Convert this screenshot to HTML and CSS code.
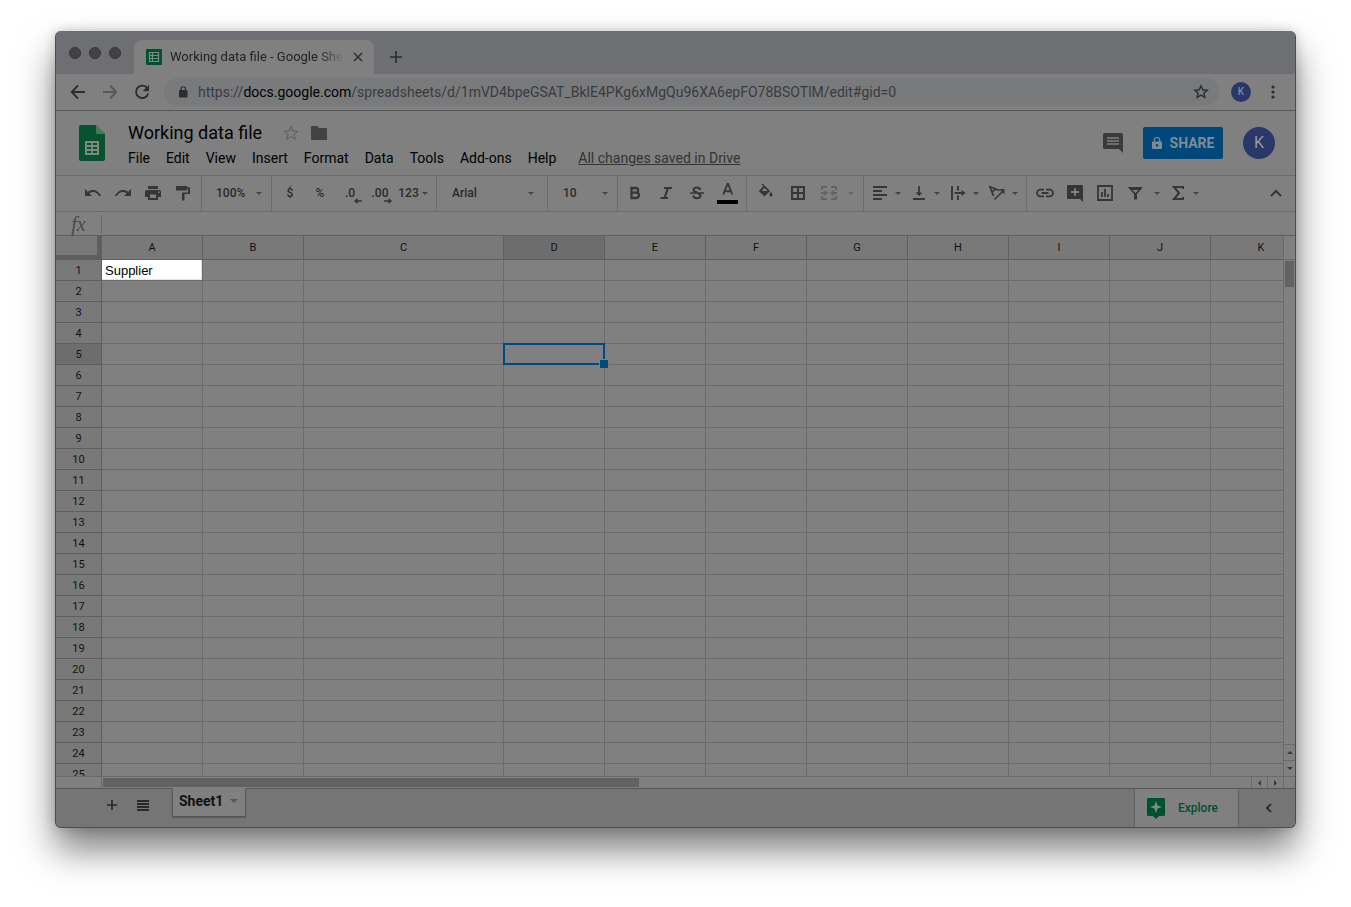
FILE: index.html
```html
<!DOCTYPE html>
<html lang="en">
<head>
<meta charset="utf-8">
<title>Working data file - Google Sheets</title>
<link rel="stylesheet" href="styles.css">
</head>
<body>
<div class="window">
  <div class="tabstrip">
    <div class="lights"><i></i><i></i><i></i></div>
    <div class="tab">
      <svg class="favicon" width="16" height="16" viewBox="0 0 16 16"><rect width="16" height="16" rx="1" fill="#00512f"/><path d="M3.5 3.5h9v9h-9zM3.5 6.5h9M3.5 9.500h9M6.500 3.500v9" fill="none" stroke="#7c8a82" stroke-width="1.200"/></svg>
      <span class="tab-title">Working data file - Google Sheets</span>
      <button class="plain" aria-label="Close tab"><svg width="10" height="10" viewBox="0 0 10 10"><path d="M1 1l8 8M9 1l-8 8" stroke="#303133" stroke-width="1.600"/></svg></button>
    </div>
    <button class="plain new-tab" aria-label="New tab"><svg width="12" height="12" viewBox="0 0 12 12"><path d="M6 0v12M0 6h12" stroke="#2b2c2e" stroke-width="1.600"/></svg></button>
  </div>

  <div class="navbar">
    <button class="plain nav" aria-label="Back"><svg width="16" height="16" viewBox="0 0 16 16"><path d="M15 8H2M8 1.500L1.700 8 8 14.500" fill="none" stroke="#2c2d2f" stroke-width="1.900"/></svg></button>
    <button class="plain nav" aria-label="Forward"><svg width="16" height="16" viewBox="0 0 16 16"><path d="M1 8h13M8 1.500L14.300 8 8 14.500" fill="none" stroke="#57585a" stroke-width="1.900"/></svg></button>
    <button class="plain nav" aria-label="Reload"><svg width="16" height="16" viewBox="0 0 16 16"><path d="M13.500 4.500A6.200 6.200 0 1 0 14.200 9.500" fill="none" stroke="#2c2d2f" stroke-width="1.900"/><path d="M15 .8v6.400H8.600z" fill="#2c2d2f"/></svg></button>
    <div class="omnibox">
      <svg width="10" height="12" viewBox="0 0 10 12"><rect x="1" y="4" width="8.500" height="7.500" rx="1" fill="#2c2d2f"/><path d="M3 5V3a2.250 2.250 0 0 1 4.500 0v2" fill="none" stroke="#2c2d2f" stroke-width="1.200"/></svg>
      <span class="url">https://<b>docs.google.com</b>/spreadsheets/d/1mVD4bpeGSAT_BklE4PKg6xMgQu96XA6epFO78BSOTlM/edit#gid=0</span>
      <svg width="16" height="16" viewBox="0 0 16 16"><path d="M8 1.800l1.800 4 4.400.400-3.300 2.900 1 4.300L8 11.100l-3.900 2.300 1-4.300L1.800 6.200l4.400-.400z" fill="none" stroke="#2c2d2f" stroke-width="1.400"/></svg>
    </div>
    <span class="avatar small">K</span>
    <button class="plain more" aria-label="More"><svg width="4" height="14" viewBox="0 0 4 14"><g fill="#2c2d2f"><circle cx="2" cy="2" r="1.600"/><circle cx="2" cy="7" r="1.600"/><circle cx="2" cy="12" r="1.600"/></g></svg></button>
  </div>

  <header class="header">
    <svg class="logo" width="26" height="36" viewBox="0 0 26 36"><path d="M2 0h15l9 9v25a2 2 0 0 1-2 2H2a2 2 0 0 1-2-2V2a2 2 0 0 1 2-2z" fill="#07532f"/><path d="M17 0l9 9h-7.500A1.500 1.500 0 0 1 17 7.500z" fill="#447a5e"/><path d="M6 16h14v14H6z" fill="#7c8a82"/><path d="M8 18h4.200v2H8zM14 18h4v2h-4zM8 22h4.200v2H8zM14 22h4v2h-4zM8 26h4.200v2H8zM14 26h4v2h-4z" fill="#07532f"/></svg>
    <div class="doc">
      <div class="title-row">
        <h1>Working data file</h1>
        <svg width="16" height="16" viewBox="0 0 16 16"><path d="M8 1l1.800 5 5.200.200-4.100 3.200 1.400 5L8 11.500l-4.300 2.900 1.400-5L1 6.200 6.200 6z" fill="none" stroke="#5c5c5c" stroke-width="1"/></svg>
        <svg width="16" height="14" viewBox="0 0 16 14"><path d="M1 0h5.500L8 2h7a1 1 0 0 1 1 1v10a1 1 0 0 1-1 1H1a1 1 0 0 1-1-1V1a1 1 0 0 1 1-1z" fill="#424242"/></svg>
      </div>
      <nav class="menus">
        <button>File</button><button>Edit</button><button>View</button><button>Insert</button><button>Format</button><button>Data</button><button>Tools</button><button>Add-ons</button><button>Help</button>
        <a href="#">All changes saved in Drive</a>
      </nav>
    </div>
    <div class="actions">
      <button class="plain" aria-label="Comments"><svg width="20" height="20" viewBox="0 0 20 20"><path d="M1.500 0h17A1.500 1.500 0 0 1 20 1.500V20l-4-4H1.500A1.500 1.500 0 0 1 0 14.500v-13A1.500 1.500 0 0 1 1.500 0z" fill="#3a3a3a"/><path d="M4 5h12M4 8h12M4 11h12" stroke="#808080" stroke-width="1.700"/></svg></button>
      <button class="share"><svg width="10" height="12" viewBox="0 0 10 12"><path d="M1 4.500h8a1 1 0 0 1 1 1V11a1 1 0 0 1-1 1H1a1 1 0 0 1-1-1V5.500a1 1 0 0 1 1-1zM5 7a1.300 1.300 0 1 0 0 2.600A1.300 1.300 0 0 0 5 7z" fill="#7f8c96" fill-rule="evenodd"/><path d="M2.300 5V3.200a2.700 2.700 0 0 1 5.400 0V5" fill="none" stroke="#7f8c96" stroke-width="1.200"/></svg>SHARE</button>
      <span class="avatar">K</span>
    </div>
  </header>

  <div class="toolbar">
    <div class="group history">
      <button aria-label="Undo"><svg width="18" height="18" viewBox="0 0 18 18"><path d="M1 5v7h7L5.400 9.400C8.500 7 12.800 8 15.300 12.300l1.700-.700C14 5.800 8 4.500 3.900 7.900z" fill="#363636"/></svg></button>
      <button aria-label="Redo"><svg width="18" height="18" viewBox="0 0 18 18"><path d="M17 5v7h-7l2.600-2.600C9.500 7 5.200 8 2.700 12.300L1 11.600C4 5.800 10 4.500 14.100 7.900z" fill="#363636"/></svg></button>
      <button aria-label="Print"><svg width="18" height="18" viewBox="0 0 18 18"><path d="M4 2h10v3H4zM3 6h12a2 2 0 0 1 2 2v5h-3v3H4v-3H1V8a2 2 0 0 1 2-2zM6 10.500V14h6v-3.500zM14 7.500V9h1.500V7.500z" fill="#363636" fill-rule="evenodd"/></svg></button>
      <button aria-label="Paint format"><svg width="18" height="18" viewBox="0 0 18 18"><path d="M2 2h11v1.200h3V10h-5.500v6.500h-2.500V8.500h6V4.700h-1V6.500H2z" fill="#363636"/></svg></button>
    </div>
    <div class="group">
      <label class="drop zoom"><select aria-label="Zoom"><option>100%</option></select></label>
    </div>
    <div class="group numbers">
      <button>$</button><button>%</button>
      <button class="dec">.0<svg width="10" height="6" viewBox="0 0 10 6"><path d="M9 3H3" stroke="#333" stroke-width="1.500"/><path d="M4.500 0v6L1 3z" fill="#333"/></svg></button>
      <button class="dec">.00<svg width="10" height="6" viewBox="0 0 10 6"><path d="M1 3h6" stroke="#333" stroke-width="1.500"/><path d="M5.500 0v6L9 3z" fill="#333"/></svg></button>
      <button class="formats caret">123</button>
    </div>
    <div class="group">
      <label class="drop font"><select aria-label="Font"><option>Arial</option></select></label>
    </div>
    <div class="group">
      <label class="drop size"><select aria-label="Font size"><option>10</option></select></label>
    </div>
    <div class="group style">
      <button aria-label="Bold"><svg width="18" height="18" viewBox="0 0 18 18"><path d="M5.500 4h4.300a2.300 2.300 0 0 1 0 4.700H5.500zM5.500 8.700h4.800a2.600 2.600 0 0 1 0 5.300H5.500z" fill="none" stroke="#363636" stroke-width="2.300"/></svg></button>
      <button aria-label="Italic"><svg width="18" height="18" viewBox="0 0 18 18"><path d="M7 4h8M3.500 14H11M11 4L7.500 14" fill="none" stroke="#363636" stroke-width="2.200"/></svg></button>
      <button aria-label="Strikethrough"><svg width="18" height="18" viewBox="0 0 18 18"><path d="M12.200 6C12 2.800 5.600 2.800 5.600 5.800 5.600 8 8 8.200 9 8.500M10 9.500c1.500.500 2.400 1.200 2.400 2.500 0 3-6.800 3-7-.500" fill="none" stroke="#363636" stroke-width="2.100"/><path d="M2 9h14" stroke="#363636" stroke-width="1.700"/></svg></button>
      <button aria-label="Text color"><svg width="22" height="22" viewBox="0 0 22 22"><path d="M6.300 12.500L10.500 2h.6l4.200 10.500M7.800 9.300h6" fill="none" stroke="#363636" stroke-width="1.900"/><path d="M0 18h21v4H0z" fill="#000"/></svg></button>
    </div>
    <div class="group cells">
      <button aria-label="Fill color"><svg width="18" height="18" viewBox="0 0 18 18"><path d="M5.500-.5l7.600 7.500-5.600 5.600L1.700 7l4.600-4.700L4.500.5zM7.500 3.800L4.500 7h6z" fill="#363636" fill-rule="evenodd"/><path d="M14 8c1 1.200 1.600 2.200 1.600 2.900a1.600 1.600 0 0 1-3.200 0c0-.700.600-1.700 1.600-2.900z" fill="#363636"/></svg></button>
      <button aria-label="Borders"><svg width="18" height="18" viewBox="0 0 18 18"><path d="M3 3h12v12H3zM9 3v12M3 9h12" fill="none" stroke="#363636" stroke-width="2"/></svg></button>
      <button class="caret faint" aria-label="Merge cells"><svg width="18" height="18" viewBox="0 0 18 18"><path d="M2 6V3h5M11 3h5v3M2 12v3h5M11 15h5v-3M1 9h4M13 9h4" fill="none" stroke="#636363" stroke-width="1.800"/><path d="M4.500 6L8 9l-3.500 3zM13.500 6L10 9l3.500 3z" fill="#636363"/></svg></button>
    </div>
    <div class="group align">
      <button class="caret" aria-label="Horizontal align"><svg width="18" height="18" viewBox="0 0 18 18"><path d="M2 3h14M2 7h9M2 11h14M2 15h9" stroke="#363636" stroke-width="1.800"/></svg></button>
      <button class="caret" aria-label="Vertical align"><svg width="18" height="18" viewBox="0 0 18 18"><path d="M3 15h12M9 2v8" stroke="#363636" stroke-width="1.800"/><path d="M5.500 8.500h7L9 12z" fill="#363636"/></svg></button>
      <button class="caret" aria-label="Text wrapping"><svg width="18" height="18" viewBox="0 0 18 18"><path d="M3 2v14M9 2v4.500M9 11.500V16M5.500 9H14" stroke="#363636" stroke-width="1.900"/><path d="M12.500 5.800L16.500 9l-4 3.200z" fill="#363636"/></svg></button>
      <button class="caret" aria-label="Text rotation"><svg width="18" height="18" viewBox="0 0 18 18"><path d="M5.500 12L2 2.800l9.500 3.700M4 8.200L7.800 4.800M6.500 15.500l8-8" fill="none" stroke="#363636" stroke-width="1.700"/><path d="M11 5h5.500v5.500z" fill="#363636"/></svg></button>
    </div>
    <div class="group insert">
      <button aria-label="Insert link"><svg width="18" height="18" viewBox="0 0 18 18"><path d="M8 5.700H4.300a3.300 3.300 0 0 0 0 6.600H8M10 5.700h3.700a3.300 3.300 0 0 1 0 6.600H10M5.500 9h7" fill="none" stroke="#363636" stroke-width="1.800"/></svg></button>
      <button aria-label="Insert comment"><svg width="18" height="18" viewBox="0 0 18 18"><path d="M2 1h14a1 1 0 0 1 1 1v16l-3-3H2a1 1 0 0 1-1-1V2a1 1 0 0 1 1-1z" fill="#363636"/><path d="M9 4v8M5 8h8" stroke="#808080" stroke-width="1.800"/></svg></button>
      <button aria-label="Insert chart"><svg width="18" height="18" viewBox="0 0 18 18"><path d="M2 2h14v14H2zM6 8v5M9 5v8M12 10v3" fill="none" stroke="#363636" stroke-width="1.800"/></svg></button>
      <button class="caret filter" aria-label="Filter"><svg width="18" height="18" viewBox="0 0 18 18"><path d="M2 3h14v1.500L11 10v5.500H8V10L3 4.500zM6.500 6L9.500 9l3-3z" fill="#363636" fill-rule="evenodd"/></svg></button>
      <button class="caret" aria-label="Functions"><svg width="18" height="18" viewBox="0 0 18 18"><path d="M14 5V3H5l5 6-5 6h9v-2" fill="none" stroke="#363636" stroke-width="2.100"/></svg></button>
    </div>
    <button class="plain collapse" aria-label="Hide menus"><svg width="12" height="8" viewBox="0 0 12 8"><path d="M1 7l5-5 5 5" fill="none" stroke="#363636" stroke-width="2"/></svg></button>
  </div>

  <div class="formula"><span class="fx">fx</span><input aria-label="Formula"></div>

  <main class="sheet">
    <div class="viewport">
      <table>
        <colgroup><col class="c-head"><col class="c"><col class="c"><col class="c-wide"><col class="c" span="8"></colgroup>
        <thead><tr><th class="corner"></th><th>A</th><th>B</th><th>C</th><th class="on">D</th><th>E</th><th>F</th><th>G</th><th>H</th><th>I</th><th>J</th><th>K</th></tr></thead>
        <tbody>
        <tr><th>1</th><td class="lit">Supplier</td><td><td><td><td><td><td><td><td><td><td></tr>
        <tr><th>2</th><td><td><td><td><td><td><td><td><td><td><td></tr>
        <tr><th>3</th><td><td><td><td><td><td><td><td><td><td><td></tr>
        <tr><th>4</th><td><td><td><td><td><td><td><td><td><td><td></tr>
        <tr><th class="on">5</th><td><td><td><td class="selected"><td><td><td><td><td><td><td></tr>
        <tr><th>6</th><td><td><td><td><td><td><td><td><td><td><td></tr>
        <tr><th>7</th><td><td><td><td><td><td><td><td><td><td><td></tr>
        <tr><th>8</th><td><td><td><td><td><td><td><td><td><td><td></tr>
        <tr><th>9</th><td><td><td><td><td><td><td><td><td><td><td></tr>
        <tr><th>10</th><td><td><td><td><td><td><td><td><td><td><td></tr>
        <tr><th>11</th><td><td><td><td><td><td><td><td><td><td><td></tr>
        <tr><th>12</th><td><td><td><td><td><td><td><td><td><td><td></tr>
        <tr><th>13</th><td><td><td><td><td><td><td><td><td><td><td></tr>
        <tr><th>14</th><td><td><td><td><td><td><td><td><td><td><td></tr>
        <tr><th>15</th><td><td><td><td><td><td><td><td><td><td><td></tr>
        <tr><th>16</th><td><td><td><td><td><td><td><td><td><td><td></tr>
        <tr><th>17</th><td><td><td><td><td><td><td><td><td><td><td></tr>
        <tr><th>18</th><td><td><td><td><td><td><td><td><td><td><td></tr>
        <tr><th>19</th><td><td><td><td><td><td><td><td><td><td><td></tr>
        <tr><th>20</th><td><td><td><td><td><td><td><td><td><td><td></tr>
        <tr><th>21</th><td><td><td><td><td><td><td><td><td><td><td></tr>
        <tr><th>22</th><td><td><td><td><td><td><td><td><td><td><td></tr>
        <tr><th>23</th><td><td><td><td><td><td><td><td><td><td><td></tr>
        <tr><th>24</th><td><td><td><td><td><td><td><td><td><td><td></tr>
        <tr><th>25</th><td><td><td><td><td><td><td><td><td><td><td></tr>
        </tbody>
      </table>
    </div>
    <div class="vscroll">
      <div class="vtop"></div>
      <div class="vthumb"></div>
      <button class="step up" aria-label="Scroll up"></button>
      <button class="step down" aria-label="Scroll down"></button>
    </div>
    <div class="hscroll">
      <div class="htrack"><div class="hthumb"></div></div>
      <button class="step prev" aria-label="Scroll left"></button>
      <button class="step next" aria-label="Scroll right"></button>
    </div>
    <div class="scroll-corner"></div>
  </main>

  <footer class="bottom">
    <button class="plain add" aria-label="Add sheet"><svg width="10" height="10" viewBox="0 0 10 10"><path d="M5 0v10M0 5h10" stroke="#2a2a2a" stroke-width="1.700"/></svg></button>
    <button class="plain list" aria-label="All sheets"><svg width="12" height="11" viewBox="0 0 12 11"><path d="M0 1h12M0 4h12M0 7h12M0 10h12" stroke="#2a2a2a" stroke-width="1.900"/></svg></button>
    <button class="sheet-tab">Sheet1</button>
    <button class="explore"><svg width="18" height="21" viewBox="0 0 18 21"><path d="M1.500 0h15A1.500 1.500 0 0 1 18 1.500v15a1.500 1.500 0 0 1-1.500 1.500H12l-3 3-3-3H1.500A1.500 1.500 0 0 1 0 16.500v-15A1.500 1.500 0 0 1 1.500 0z" fill="#00512f"/><path d="M9 3l1.600 4.400L15 9l-4.400 1.600L9 15l-1.600-4.400L3 9l4.400-1.600z" fill="#7c8a82"/></svg>Explore</button>
    <button class="plain side" aria-label="Show side panel"><svg width="7" height="10" viewBox="0 0 7 10"><path d="M6 1L2 5l4 4" fill="none" stroke="#222" stroke-width="1.700"/></svg></button>
  </footer>
</div>
</body>
</html>
```
FILE: styles.css
```css
* { box-sizing: border-box; }
body {
  margin: 0;
  height: 100vh;
  padding: 31px 55px 79px;
  background: #fff;
  font-family: Roboto, "Liberation Sans", sans-serif;
  color: #000;
  overflow: hidden;
}
button, select, input {
  margin: 0;
  padding: 0;
  border: 0;
  background: none;
  font: inherit;
  color: inherit;
  appearance: none;
}
svg { display: block; flex: none; overflow: visible; }
.plain { display: flex; align-items: center; justify-content: center; }

.window {
  display: flex;
  flex-direction: column;
  height: 100%;
  border: 1px solid #4c4c4c;
  border-top: 0;
  border-radius: 6px;
  background: #808080;
  overflow: hidden;
  box-shadow: 0 22px 36px rgba(0, 0, 0, .5), 0 0 12px rgba(0, 0, 0, .2);
}

/* Browser chrome */
.tabstrip {
  display: flex;
  height: 43px;
  padding-left: 13px;
  background: #6d6f73;
}
.lights { display: flex; gap: 8px; width: 65px; padding-top: 16px; }
.lights i {
  width: 12px;
  height: 12px;
  border: 1px solid #363636;
  border-radius: 50%;
  background: #434343;
}
.tab {
  display: flex;
  align-items: center;
  width: 240px;
  margin-top: 9px;
  padding: 0 11px 0 12px;
  border-radius: 8px 8px 0 0;
  background: #808080;
}
.tab-title {
  flex: 1;
  margin: 0 8px;
  overflow: hidden;
  white-space: nowrap;
  font-size: 13px;
  line-height: 18px;
  color: #1f2022;
  -webkit-mask-image: linear-gradient(90deg, #000 85%, transparent);
  mask-image: linear-gradient(90deg, #000 85%, transparent);
}
.new-tab { width: 44px; margin-top: 9px; }
.navbar {
  display: flex;
  align-items: center;
  height: 37px;
  padding: 0 12px 0 6px;
  border-bottom: 1px solid #585858;
}
.nav { width: 32px; height: 32px; }
.omnibox {
  display: flex;
  flex: 1;
  align-items: center;
  gap: 10px;
  height: 28px;
  margin-left: 6px;
  padding: 0 10px 0 14px;
  border-radius: 14px;
  background: #797a7c;
}
.url {
  flex: 1;
  overflow: hidden;
  white-space: nowrap;
  font-size: 14px;
  line-height: 20px;
  color: #3a3b3e;
}
.url b { font-weight: 400; color: #000; }
.avatar {
  width: 32px;
  border-radius: 50%;
  background: #2a3869;
  color: #96999f;
  font-size: 16px;
  line-height: 32px;
  text-align: center;
}
.avatar.small { width: 20px; margin-left: 12px; font-size: 10px; line-height: 20px; }
.more { width: 20px; height: 28px; margin-left: 12px; }

/* Document header */
.header { display: flex; height: 64px; padding: 0 20px 0 23px; }
.logo { margin-top: 14px; }
.doc { flex: 1; margin-left: 23px; padding-top: 10px; }
.title-row { display: flex; align-items: center; gap: 12px; height: 24px; }
h1 { margin: 0 9px 0 0; font-size: 18px; font-weight: 400; line-height: 24px; }
.menus {
  display: flex;
  gap: 16px;
  font-size: 14px;
  line-height: 26px;
  white-space: nowrap;
}
.menus a { margin-left: 6px; color: #333; }
.actions { display: flex; align-items: center; gap: 20px; }
.share {
  display: flex;
  align-items: center;
  justify-content: center;
  gap: 8px;
  width: 80px;
  height: 32px;
  border-radius: 2px;
  background: #00487a;
  color: #7f8c96;
  font-size: 14px;
  font-weight: 700;
}

/* Toolbar */
.toolbar {
  display: flex;
  height: 37px;
  border-top: 1px solid #6c6c6c;
  border-bottom: 1px solid #6c6c6c;
  font-size: 12px;
  font-weight: 500;
  color: #2a2a2a;
}
.group { display: flex; align-items: flex-start; border-right: 1px solid #6c6c6c; }
.group button {
  display: flex;
  align-items: center;
  justify-content: center;
  width: 30px;
  height: 34px;
}
.history { padding: 0 3px 0 22px; }
.drop { display: flex; align-items: center; height: 34px; }
.drop select { flex: 1; }
.drop::after, .caret::after {
  content: "";
  border: 3px solid transparent;
  border-top-color: #444;
  border-bottom: 0;
}
.zoom { width: 69px; padding: 0 9px 0 14px; }
.font { width: 110px; padding: 0 13px 0 15px; }
.size { width: 69px; padding: 0 9px 0 15px; }
.numbers { padding: 0 5px 0 3px; }
.numbers .formats { width: 36px; gap: 3px; }
.dec { position: relative; }
.dec svg { position: absolute; right: 2px; bottom: 6px; }
.style { padding: 0 3px 0 2px; gap: 1px; }
.cells { padding: 0 4px 0 3px; }
.cells button { width: 32px; }
.cells .caret { width: 45px; gap: 10px; }
.faint::after { border-top-color: #676767; }
.align { padding: 0 4px 0 2px; }
.align button { width: 39px; gap: 6px; }
.insert { flex: 1; padding-left: 3px; border-right: 0; }
.insert .caret { width: 39px; gap: 6px; }
.insert .filter { width: 45px; gap: 10px; }
.insert .caret:last-child { width: 38px; }
.collapse { width: 38px; height: 34px; }

.formula { display: flex; align-items: center; height: 24px; border-bottom: 1px solid #5e5e5e; }
.fx {
  width: 46px;
  border-right: 1px solid #666;
  text-align: center;
  font: italic 20px/18px "Liberation Serif", serif;
  color: #484848;
}
.formula input { flex: 1; height: 18px; }

/* Grid */
.sheet {
  display: grid;
  flex: 1;
  grid-template-columns: minmax(0, 1fr) 12px;
  grid-template-rows: minmax(0, 1fr) 12px;
  min-height: 0;
}
.viewport { overflow: hidden; }
table { width: 1256px; table-layout: fixed; border-collapse: separate; border-spacing: 0; }
.c-head { width: 46px; }
.c { width: 101px; }
.c-wide { width: 200px; }
th, td { height: 21px; padding: 0; border: 0 solid #6b6b6b; border-width: 0 1px 1px 0; }
th {
  border-color: #5e5e5e;
  background: #797979;
  color: #111;
  font-size: 11px;
  font-weight: 400;
  line-height: 16px;
}
tbody th { padding-top: 2px; }
thead th { height: 24px; }
th.on { background: #6d6d6d; }
.corner { box-shadow: inset -4px -4px #5e5e5e; }
td.lit {
  padding: 2px 0 0 3px;
  background: #fff;
  background-clip: padding-box;
  box-shadow: inset -1px -1px #e4e4e4;
  font: 13px/16px "Liberation Sans", Arial, sans-serif;
}
.selected { position: relative; }
.selected::before { content: ""; position: absolute; inset: -1px; border: 2px solid #004a7d; }
.selected::after {
  content: "";
  position: absolute;
  right: -5px;
  bottom: -5px;
  width: 8px;
  height: 8px;
  border: 1px solid #808080;
  background: #004a7d;
}
.vscroll { display: flex; flex-direction: column; border-left: 1px solid #6b6b6b; }
.vtop { height: 24px; border-bottom: 1px solid #6b6b6b; }
.vthumb { height: 26px; margin: 1px 1px auto; background: #626262; }
.step { display: flex; align-items: center; justify-content: center; height: 16px; border-top: 1px solid #6b6b6b; }
.step::before { content: ""; border: 3px solid transparent; }
.up::before { border-top: 0; border-bottom-color: #383838; }
.down::before { border-bottom: 0; border-top-color: #383838; }
.hscroll { display: flex; border-top: 1px solid #6b6b6b; }
.htrack { flex: 1; margin-left: 45px; padding: 1px 0 0 1px; border-left: 1px solid #6b6b6b; }
.hthumb { width: 536px; max-width: 47%; height: 9px; background: #626262; }
.hscroll .step { width: 16px; height: 11px; border-top: 0; border-left: 1px solid #6b6b6b; }
.prev::before { border-left: 0; border-right-color: #383838; }
.next::before { border-right: 0; border-left-color: #383838; }
.scroll-corner { border-top: 1px solid #6b6b6b; border-left: 1px solid #6b6b6b; }

/* Sheet tabs */
.bottom { display: flex; height: 39px; border-top: 1px solid #565656; background: #757575; }
.add { width: 30px; height: 32px; margin-left: 41px; }
.list { width: 32px; height: 32px; }
.sheet-tab {
  display: flex;
  align-items: center;
  gap: 7px;
  height: 29px;
  margin: -1px auto 0 13px;
  padding: 0 7px 4px 6px;
  border: 1px solid #565656;
  border-top-color: #808080;
  background: #808080;
  box-shadow: 0 1px 1px rgba(0, 0, 0, .2);
  font-size: 14px;
  font-weight: 700;
  color: #111;
}
.sheet-tab::after { content: ""; border: 4px solid transparent; border-top-color: #555; border-bottom: 0; }
.explore {
  display: flex;
  align-items: center;
  gap: 13px;
  width: 105px;
  padding-left: 12px;
  border: 0 solid #606060;
  border-width: 0 1px;
  background: #808080;
  color: #00512f;
  font-size: 12px;
  font-weight: 500;
}
.side { width: 56px; padding-left: 3px; }
```
